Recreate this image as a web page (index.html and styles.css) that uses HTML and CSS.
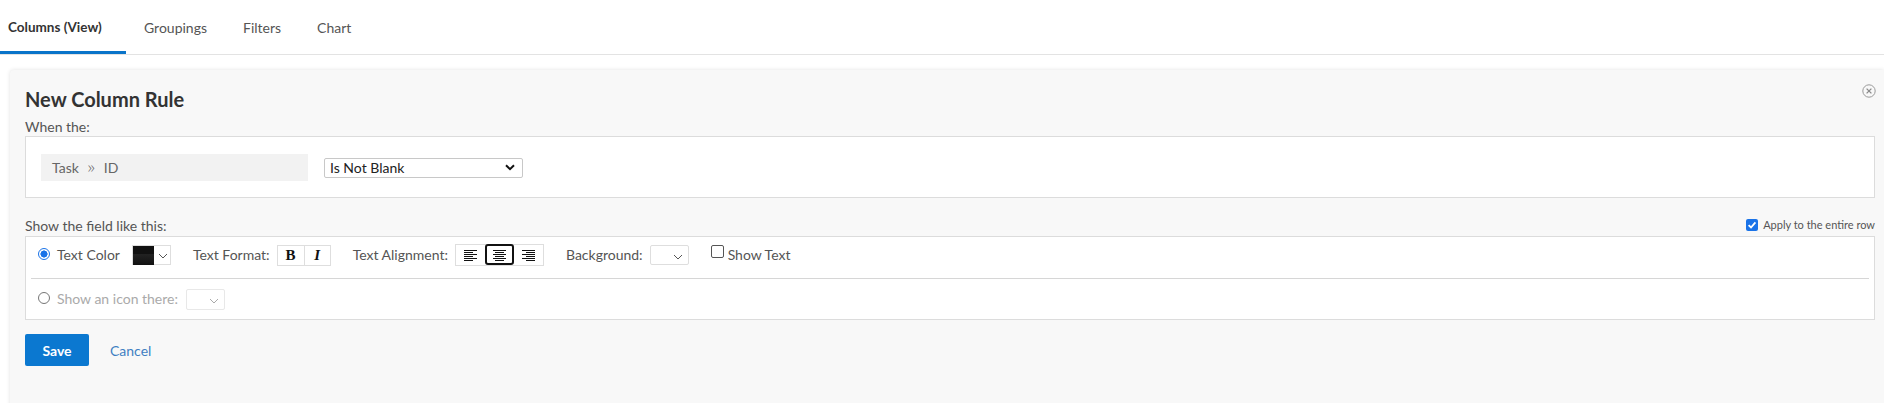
FILE: index.html
```html
<!DOCTYPE html>
<html>
<head>
<meta charset="utf-8">
<link rel="stylesheet" href="styles.css">
</head>
<body>
<div class="tabs">
  <div class="tab tab-active">Columns (View)</div>
  <div class="tab">Groupings</div>
  <div class="tab">Filters</div>
  <div class="tab">Chart</div>
</div>
<div class="content">
  <div class="panel">
    <div class="close">
      <svg width="14" height="14" viewBox="0 0 14 14"><circle cx="7" cy="7" r="6.2" fill="none" stroke="#9a9a9a" stroke-width="1"/><path d="M4.6 4.6 L9.4 9.4 M9.4 4.6 L4.6 9.4" stroke="#8a8a8a" stroke-width="1.3"/></svg>
    </div>
    <h1 class="title">New Column Rule</h1>
    <div class="label">When the:</div>
    <div class="box box-when">
      <div class="field">
        <span>Task</span>
        <span class="raquo">&raquo;</span>
        <span>ID</span>
      </div>
      <div class="select select-op">
        <span>Is Not Blank</span>
        <svg width="10" height="7" viewBox="0 0 10 7"><path d="M1 1.2 L5 5.2 L9 1.2" fill="none" stroke="#111" stroke-width="2"/></svg>
      </div>
    </div>
    <div class="show-row">
      <div class="label">Show the field like this:</div>
      <label class="apply">
        <span class="check-on">
          <svg width="12" height="12" viewBox="0 0 12 12"><path d="M2.6 6.2 L5 8.5 L9.4 3.4" fill="none" stroke="#fff" stroke-width="1.8"/></svg>
        </span>
        Apply to the entire row
      </label>
    </div>
    <div class="box box-show">
      <div class="row row-first">
        <div class="grp">
          <span class="radio radio-on"></span>
          <span class="txt">Text Color</span>
          <span class="swatch">
            <span class="swatch-color"></span>
            <svg width="10" height="6" viewBox="0 0 10 6"><path d="M1 1 L5 5 L9 1" fill="none" stroke="#555" stroke-width="1"/></svg>
          </span>
        </div>
        <div class="grp">
          <span class="txt">Text Format:</span>
          <span class="btn-group">
            <span class="btn b">B</span><span class="btn i">I</span>
          </span>
        </div>
        <div class="grp">
          <span class="txt">Text Alignment:</span>
          <span class="btn-group align">
            <span class="btn abtn">
              <svg width="13" height="12" viewBox="0 0 13 12"><path d="M0 1.5H13M0 3.5H9M0 5.5H13M0 7.5H9M0 9.5H13M0 11.5H9" stroke="#111" stroke-width="1"/></svg>
            </span><span class="btn abtn abtn-on">
              <svg width="13" height="12" viewBox="0 0 13 12"><path d="M0 1.5H13M2 3.5H11M0 5.5H13M2 7.5H11M0 9.5H13M2 11.5H11" stroke="#111" stroke-width="1"/></svg>
            </span><span class="btn abtn">
              <svg width="13" height="12" viewBox="0 0 13 12"><path d="M0 1.5H13M4 3.5H13M0 5.5H13M4 7.5H13M0 9.5H13M4 11.5H13" stroke="#111" stroke-width="1"/></svg>
            </span>
          </span>
        </div>
        <div class="grp">
          <span class="txt">Background:</span>
          <span class="mini-select">
            <svg width="10" height="6" viewBox="0 0 10 6"><path d="M1 1 L5 5 L9 1" fill="none" stroke="#555" stroke-width="1"/></svg>
          </span>
        </div>
        <div class="grp grp-tight">
          <span class="check-off"></span>
          <span class="txt">Show Text</span>
        </div>
      </div>
      <div class="row row-second">
        <div class="grp">
          <span class="radio"></span>
          <span class="txt muted">Show an icon there:</span>
          <span class="mini-select mini-disabled">
            <svg width="10" height="6" viewBox="0 0 10 6"><path d="M1 1 L5 5 L9 1" fill="none" stroke="#aaa" stroke-width="1"/></svg>
          </span>
        </div>
      </div>
    </div>
    <div class="actions">
      <button class="save">Save</button>
      <a class="cancel">Cancel</a>
    </div>
  </div>
</div>
</body>
</html>
```
FILE: styles.css
```css
html, body {
  margin: 0;
  padding: 0;
  background: #fff;
  overflow: hidden;
}
body {
  font-family: "Lato", "Open Sans", sans-serif;
  font-size: 14px;
  color: #555;
}
.tabs {
  display: flex;
  height: 54px;
  border-bottom: 1px solid #e3e3e3;
}
.tab {
  box-sizing: border-box;
  height: 54px;
  padding: 3px 18px 0 18px;
  display: flex;
  align-items: center;
  color: #555;
  font-size: 14px;
  border-bottom: 3px solid transparent;
}
.tab-active {
  width: 126px;
  padding-left: 8px;
  padding-right: 0;
  font-weight: 700;
  font-size: 13.5px;
  color: #333;
  border-bottom-color: #0a74c9;
}
.content {
  padding: 15px 0 0 10px;
}
.panel {
  position: relative;
  background: #f8f8f8;
  box-shadow: 0 0 4px rgba(0, 0, 0, 0.12);
  border-radius: 4px 0 0 0;
  padding: 17px 9px 40px 15px;
}
.close {
  position: absolute;
  top: 14px;
  right: 8px;
  width: 14px;
  height: 14px;
}
.close svg { display: block; }
.title {
  margin: 0 0 8px 0;
  font-size: 20px;
  line-height: 24px;
  font-weight: 700;
  color: #333;
}
.label {
  line-height: 16px;
  color: #555;
  margin-bottom: 1px;
}
.box {
  background: #fff;
  border: 1px solid #dcdcdc;
}
.box-when {
  display: flex;
  align-items: center;
  padding: 17px 15px 16px 15px;
}
.field {
  box-sizing: border-box;
  width: 267px;
  height: 27px;
  background: #f2f2f2;
  display: flex;
  align-items: center;
  padding-left: 11px;
  gap: 9px;
  color: #666;
}
.raquo {
  font-family: "Open Sans", sans-serif;
  font-weight: 300;
  font-size: 16px;
  color: #666;
  margin-top: -2px;
}
.select {
  box-sizing: border-box;
  margin-left: 16px;
  width: 199px;
  height: 20px;
  border: 1px solid #c8c8c8;
  border-radius: 2px;
  display: flex;
  align-items: center;
  justify-content: space-between;
  padding: 0 7px 0 5px;
  color: #222;
}
.show-row {
  display: flex;
  justify-content: space-between;
  align-items: flex-end;
  margin-top: 20px;
}
.show-row .label { margin-bottom: 2px; }
.apply {
  display: flex;
  align-items: center;
  gap: 5px;
  font-size: 11px;
  color: #555;
  margin-bottom: 5px;
}
.check-on {
  width: 12px;
  height: 12px;
  border-radius: 2px;
  background: #1a73e8;
  display: inline-flex;
}
.row {
  display: flex;
  align-items: center;
  gap: 22px;
  padding-left: 12px;
}
.row-first {
  box-sizing: border-box;
  height: 42px;
  margin: 0 5px;
  padding-left: 7px;
  padding-bottom: 5px;
  border-bottom: 1px solid #d6d6d6;
}
.row-second {
  height: 40px;
}
.grp {
  display: flex;
  align-items: center;
  gap: 7px;
}
.grp-tight { gap: 4px; }
.txt { line-height: 16px; }
.muted { color: #aaa; }
.radio {
  box-sizing: border-box;
  width: 12px;
  height: 12px;
  border-radius: 50%;
  border: 1px solid #767676;
  margin-top: -3px;
}
.radio-on {
  border: 1.5px solid #1a73e8;
  background: radial-gradient(circle, #1a73e8 0 3.3px, #fff 3.8px);
}
.swatch {
  box-sizing: border-box;
  margin-left: 5px;
  width: 39px;
  height: 20px;
  border: 1px solid #dedede;
  display: flex;
  align-items: center;
  background: #fff;
}
.swatch-color {
  width: 21px;
  height: 19px;
  margin-top: 1px;
  background: linear-gradient(#111 0, #111 40%, #222 45%, #111 100%);
}
.swatch svg { margin-left: 4px; margin-top: 2px; }
.btn-group {
  display: flex;
  border: 1px solid #dedede;
  height: 19px;
  background: #fff;
}
.btn {
  box-sizing: border-box;
  height: 19px;
  display: flex;
  align-items: center;
  justify-content: center;
  font-family: "Liberation Serif", serif;
  font-size: 15px;
  color: #111;
}
.b { width: 27px; font-weight: 700; border-right: 1px solid #dedede; }
.i { width: 25px; font-style: italic; font-weight: 700; }
.align { height: 20px; }
.abtn {
  width: 29px;
  height: 20px;
}
.abtn-on {
  border: 2px solid #111;
  border-radius: 3px;
  height: 21px;
  margin-top: -1px;
}
.mini-select {
  box-sizing: border-box;
  width: 39px;
  height: 20px;
  border: 1px solid #dedede;
  border-radius: 2px;
  display: flex;
  align-items: center;
  justify-content: flex-end;
  padding-right: 5px;
  padding-top: 3px;
  background: #fff;
}
.mini-disabled { border-color: #e8e8e8; height: 21px; margin-left: 1px; }
.check-off {
  box-sizing: border-box;
  width: 13px;
  height: 13px;
  border: 1px solid #555;
  border-radius: 2px;
  background: #fff;
  margin-top: -8px;
}
.actions {
  display: flex;
  align-items: center;
  margin-top: 14px;
  gap: 21px;
}
.save {
  width: 64px;
  height: 32px;
  border: none;
  border-radius: 2px;
  background: #0b78d0;
  color: #fff;
  font-family: "Lato", sans-serif;
  font-size: 14px;
  font-weight: 700;
  padding: 0;
}
.cancel {
  color: #3f7fc2;
  font-size: 14px;
}
```
